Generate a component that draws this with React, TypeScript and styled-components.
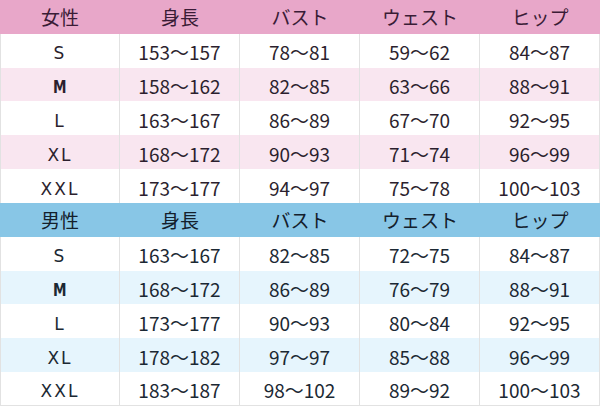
import React from "react";
import styled, { createGlobalStyle } from "styled-components";

const Global = createGlobalStyle`
  html, body { margin: 0; padding: 0; background: #ffffff; }
  body { font-family: "Noto Sans CJK JP", "Noto Sans", sans-serif; }
`;

type Theme = { head: string; stripe: string; text: string; headText: string };

const pink: Theme = { head: "#e8a7c9", stripe: "#f9e6f0", text: "#2c1f2e", headText: "#3a1c36" };
const blue: Theme = { head: "#88c6e6", stripe: "#e6f5fd", text: "#1b2833", headText: "#14202c" };

const Page = styled.div`
  width: 600px;
  height: 406px;
  display: flex;
  flex-direction: column;
`;

const Table = styled.div`
  flex: 1;
  display: grid;
  grid-template-columns: repeat(5, 1fr);
  grid-template-rows: repeat(6, 1fr);
`;

const HeadCell = styled.div<{ $bg: string; $color: string }>`
  background: ${(p) => p.$bg};
  color: ${(p) => p.$color};
  display: flex;
  align-items: center;
  justify-content: center;
  font-size: 19px;
  line-height: 1;
`;

const Cell = styled.div<{ $bg: string; $color: string; $first: boolean; $last: boolean }>`
  background: ${(p) => p.$bg};
  color: ${(p) => p.$color};
  display: flex;
  align-items: center;
  justify-content: center;
  font-size: 19px;
  line-height: 1;
  padding-top: 2px;
  box-sizing: border-box;
  border-right: 1px solid #e2e2e2;
  border-left: ${(p) => (p.$first ? "1px solid #e2e2e2" : "none")};
  border-bottom: ${(p) => (p.$last ? "1px solid #e2e2e2" : "none")};
`;

const SizeLabel = styled.span<{ $narrow: boolean }>`
  font-family: "DejaVu Sans", sans-serif;
  font-size: 17px;
  letter-spacing: 2px;
  margin-top: 4px;
  font-weight: ${(p) => (p.$narrow ? 700 : 400)};
  display: inline-block;
  transform: ${(p) => (p.$narrow ? "scaleX(0.8)" : "none")};
`;

type Section = { theme: Theme; head: string[]; rows: string[][] };

const sections: Section[] = [
  {
    theme: pink,
    head: ["女性", "身長", "バスト", "ウェスト", "ヒップ"],
    rows: [
      ["S", "153～157", "78～81", "59～62", "84～87"],
      ["M", "158～162", "82～85", "63～66", "88～91"],
      ["L", "163～167", "86～89", "67～70", "92～95"],
      ["XL", "168～172", "90～93", "71～74", "96～99"],
      ["XXL", "173～177", "94～97", "75～78", "100～103"],
    ],
  },
  {
    theme: blue,
    head: ["男性", "身長", "バスト", "ウェスト", "ヒップ"],
    rows: [
      ["S", "163～167", "82～85", "72～75", "84～87"],
      ["M", "168～172", "86～89", "76～79", "88～91"],
      ["L", "173～177", "90～93", "80～84", "92～95"],
      ["XL", "178～182", "97～97", "85～88", "96～99"],
      ["XXL", "183～187", "98～102", "89～92", "100～103"],
    ],
  },
];

export default function App() {
  return (
    <>
      <Global />
      <Page>
        {sections.map((s, si) => (
          <Table key={si}>
            {s.head.map((h) => (
              <HeadCell key={h} $bg={s.theme.head} $color={s.theme.headText}>
                {h}
              </HeadCell>
            ))}
            {s.rows.map((r, ri) =>
              r.map((v, ci) => (
                <Cell
                  key={`${ri}-${ci}`}
                  $bg={ri % 2 === 1 ? s.theme.stripe : "#ffffff"}
                  $color={s.theme.text}
                  $first={ci === 0}
                  $last={si === 1 && ri === 4}
                >
                  {ci === 0 ? <SizeLabel $narrow={v === "M"}>{v}</SizeLabel> : v}
                </Cell>
              ))
            )}
          </Table>
        ))}
      </Page>
    </>
  );
}
